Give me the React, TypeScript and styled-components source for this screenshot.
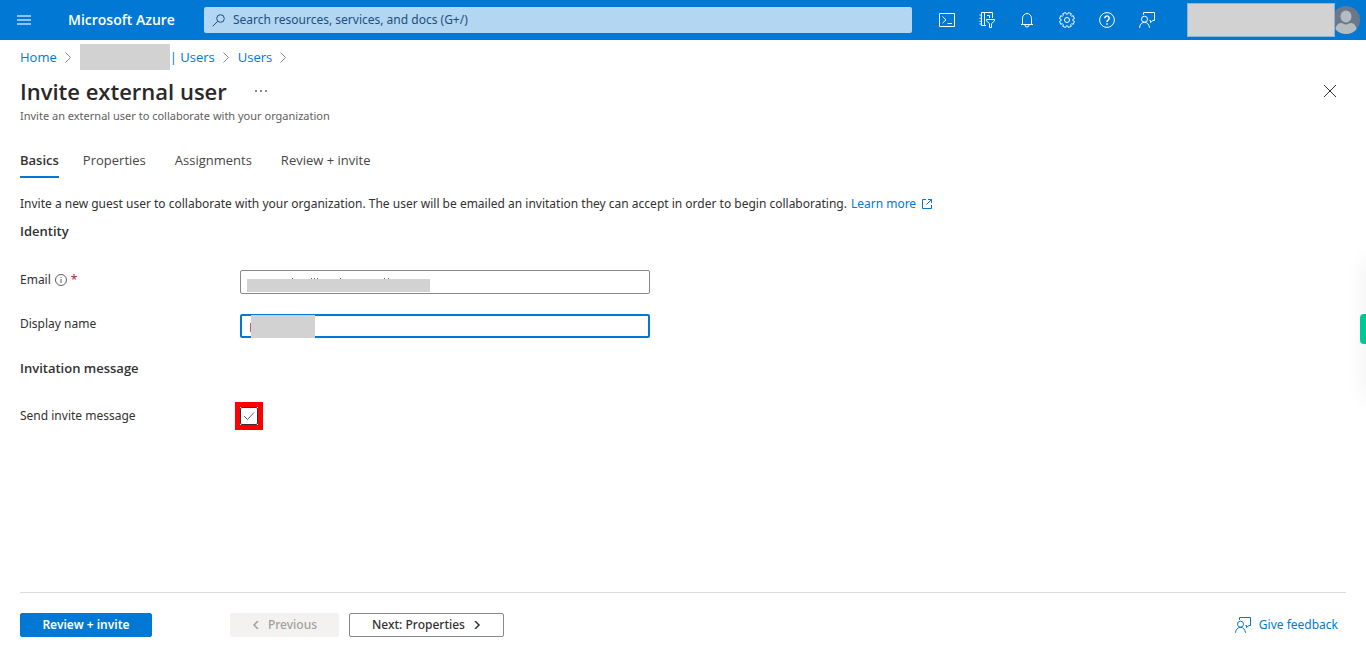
import React, { useState } from "react";
import styled, { createGlobalStyle, css } from "styled-components";

const GlobalStyle = createGlobalStyle`
  *, *::before, *::after { box-sizing: border-box; }
  body {
    margin: 0;
    background: #fff;
    color: #323130;
    font-family: "Noto Sans", "Open Sans", sans-serif;
    font-size: 12px;
    line-height: 18px;
  }
  button, input { font: inherit; color: inherit; }
  svg { display: block; flex: none; }
`;

const Page = styled.div`
  min-height: 100vh;
  display: flex;
  flex-direction: column;
`;

const TopBar = styled.header`
  height: 40px;
  display: flex;
  align-items: center;
  background: #0078d4;
  color: #fff;
`;

const BarButton = styled.button<{ $wide?: boolean }>`
  width: ${(p) => (p.$wide ? 48 : 40)}px;
  height: 40px;
  flex: none;
  padding: 0;
  border: 0;
  background: none;
  display: grid;
  place-items: center;
`;

const Brand = styled.a`
  width: 136px;
  flex: none;
  margin-left: 20px;
  color: #fff;
  font-family: "Open Sans", sans-serif;
  font-size: 14px;
  line-height: 20px;
  font-weight: 600;
  white-space: nowrap;
  text-decoration: none;
`;

const SearchBox = styled.label`
  flex: 1;
  height: 26px;
  padding: 0 8px;
  display: flex;
  align-items: center;
  gap: 8px;
  border-radius: 2px;
  background: #b3d6f2;
  color: #1b4f80;
`;

const SearchInput = styled.input`
  flex: 1;
  min-width: 0;
  padding: 0;
  border: 0;
  outline: 0;
  background: none;
  &::placeholder { color: #1b4f80; opacity: 1; }
`;

const BarActions = styled.nav`
  flex: none;
  display: flex;
  margin: 0 20px 0 15px;
`;

const Account = styled.div`
  flex: none;
  display: flex;
  align-items: center;
  padding-right: 6px;
`;

const Mask = styled.span<{ $w: number; $h: number }>`
  width: ${(p) => p.$w}px;
  height: ${(p) => p.$h}px;
  flex: none;
  background: #d2d2d2;
`;

const AccountMask = styled(Mask)`
  border: 1px solid #8fb4d2;
  z-index: 1;
`;

const Avatar = styled.span`
  margin-left: -3px;
`;

const Main = styled.main`
  flex: 1;
  padding: 0 20px;
`;

const Breadcrumb = styled.nav`
  height: 34px;
  display: flex;
  align-items: center;
  gap: 8px;
  font-family: "Open Sans", sans-serif;
  font-size: 13px;
`;

const Link = styled.a`
  color: #0078d4;
  text-decoration: none;
`;

const CrumbGroup = styled.span`
  display: flex;
  align-items: center;
  color: #0078d4;
`;

const TitleRow = styled.div`
  height: 34px;
  display: flex;
  align-items: center;
`;

const Title = styled.h1`
  margin: 0;
  font-family: "Open Sans", sans-serif;
  font-size: 22px;
  line-height: 30px;
  font-weight: 600;
  color: #292827;
`;

const IconButton = styled.button<{ $end?: boolean }>`
  width: 32px;
  height: 32px;
  padding: 0;
  border: 0;
  background: none;
  display: grid;
  place-items: center;
  margin-left: ${(p) => (p.$end ? "auto" : "18px")};
`;

const Subtitle = styled.p`
  margin: 0;
  font-size: 11px;
  line-height: 16px;
  color: #605e5c;
`;

const Tabs = styled.div`
  display: flex;
  gap: 24px;
  margin-top: 18px;
`;

const Tab = styled.button<{ $active: boolean }>`
  height: 36px;
  padding: 2px 5px 0 0;
  border: 0;
  border-bottom: 2px solid transparent;
  background: none;
  font-family: "Open Sans", sans-serif;
  font-size: 13px;
  color: #484644;
  ${(p) =>
    p.$active &&
    css`
      padding-right: 0;
      border-bottom-color: #0078d4;
      color: #323130;
      font-weight: 600;
    `}
`;

const Intro = styled.p`
  margin: 17px 0 0;
  display: flex;
  flex-wrap: wrap;
  gap: 4px;
`;

const LearnMore = styled(Link)`
  display: flex;
  align-items: center;
  gap: 6px;
`;

const Section = styled.h2<{ $gap: number }>`
  margin: ${(p) => p.$gap}px 0 0;
  font-family: "Open Sans", sans-serif;
  font-size: 13px;
  line-height: 18px;
  font-weight: 600;
`;

const Row = styled.div<{ $gap: number; $center?: boolean }>`
  display: flex;
  align-items: ${(p) => (p.$center ? "center" : "flex-start")};
  margin-top: ${(p) => p.$gap}px;
`;

const Label = styled.label`
  width: 220px;
  flex: none;
  display: flex;
  align-items: center;
  gap: 4px;
  height: 20px;
  svg { color: #605e5c; }
`;

const Required = styled.span`
  color: #a4262c;
`;

const Field = styled.div`
  position: relative;
  flex: 0 1 410px;
`;

const TextInput = styled.input<{ $focused?: boolean }>`
  display: block;
  width: 100%;
  height: 24px;
  padding: 0 8px;
  outline: 0;
  border: ${(p) => (p.$focused ? "2px solid #0078d4" : "1px solid #8a8886")};
  border-radius: 2px;
  background: #fff;
`;

const EmailMask = styled.svg`
  position: absolute;
  left: 7px;
  top: 7px;
`;

const NameMask = styled.svg`
  position: absolute;
  left: 9px;
  top: 1px;
`;

const Highlight = styled.span`
  width: 28px;
  height: 28px;
  margin-left: -5px;
  position: relative;
  display: grid;
  place-items: center;
  border: 5px solid #f00;
`;

const Checkbox = styled.input`
  appearance: none;
  width: 18px;
  height: 18px;
  margin: 0;
  border: 1px solid #323130;
  border-radius: 2px;
  background: #fff;
  &:not(:checked) + svg { display: none; }
`;

const Tick = styled.svg`
  position: absolute;
  inset: 0;
  pointer-events: none;
`;

const Footer = styled.footer`
  margin: 0 20px;
  padding: 20px 8px 20px 0;
  border-top: 1px solid #dcdcdc;
  display: flex;
  align-items: center;
`;

const Button = styled.button<{ $kind: "primary" | "plain"; $w: number }>`
  width: ${(p) => p.$w}px;
  height: 24px;
  padding: 0;
  display: flex;
  align-items: center;
  justify-content: center;
  gap: 8px;
  border-radius: 2px;
  border: 1px solid ${(p) => (p.$kind === "primary" ? "#0078d4" : "#8a8886")};
  background: ${(p) => (p.$kind === "primary" ? "#0078d4" : "#fff")};
  color: ${(p) => (p.$kind === "primary" ? "#fff" : "#323130")};
  font-weight: ${(p) => (p.$kind === "primary" ? 600 : 500)};
  &:disabled {
    border-color: #f3f2f1;
    background: #f3f2f1;
    color: #a19f9d;
  }
`;

const Steps = styled.div`
  display: flex;
  gap: 10px;
  margin-left: 78px;
`;

const Feedback = styled(Link)`
  margin-left: auto;
  display: flex;
  align-items: center;
  gap: 8px;
`;

const DockShade = styled.aside`
  position: fixed;
  right: 0;
  top: 240px;
  width: 6px;
  height: 178px;
  display: flex;
  align-items: center;
  &::before {
    content: "";
    position: absolute;
    right: -8px;
    top: 20px;
    bottom: 20px;
    width: 8px;
    box-shadow: 0 0 20px rgba(0, 0, 0, 0.1);
  }
`;

const DockHandle = styled.button`
  position: relative;
  width: 6px;
  height: 30px;
  padding: 0;
  border: 0;
  border-radius: 4px 0 0 4px;
  background: #00c796;
`;

type StrokeProps = { size?: number; children: React.ReactNode; width?: number };
const Stroke = ({ size = 16, width = 1, children }: StrokeProps) => (
  <svg width={size} height={size} viewBox={`0 0 ${size} ${size}`} fill="none" stroke="currentColor" strokeWidth={width} aria-hidden>
    {children}
  </svg>
);

const MenuIcon = () => (
  <svg width="14" height="10" viewBox="0 0 14 10" fill="#8fc3ec" aria-hidden>
    <path d="M0 0h14v2H0zM0 4h14v2H0zM0 8h14v2H0z" />
  </svg>
);
const SearchIcon = () => (
  <Stroke size={13}>
    <circle cx="8.5" cy="4.5" r="3.800" />
    <path d="M5.700 7.300.7 12.300" />
  </Stroke>
);
const ShellIcon = () => (
  <Stroke>
    <path d="M.5 1.5h15v13H.5z" />
    <path d="m3.500 4.500 3.500 3.300-3.500 3.300M8.500 11.500H13" />
  </Stroke>
);
const DirectoryIcon = () => (
  <Stroke>
    <path d="M7 13.500H2.500V.5h11V6M5.500.5v13M10.500 6V3.500H8M.5 3h2M.5 6.200h2M.5 9.300h2M.5 12h2" />
    <path d="M7.500 7.500h8v1.300l-3 3v3.700h-2v-3.700l-3-3z" />
  </Stroke>
);
const BellIcon = () => (
  <Stroke>
    <path d="M3.500 12.500V6.500a4.500 5 0 0 1 9 0v6M2 12.500h12M6 13a2 2 0 0 0 4 0" />
  </Stroke>
);

const gearOutline =
  [0, 1, 2, 3, 4, 5, 6, 7]
    .flatMap((tooth) =>
      [
        [-16, 5.9],
        [-12, 7.6],
        [12, 7.6],
        [16, 5.9],
      ].map(([offset, radius]) => {
        const angle = ((tooth * 45 + 22.5 + offset) * Math.PI) / 180;
        return `${(8 + radius * Math.cos(angle)).toFixed(2)} ${(8 + radius * Math.sin(angle)).toFixed(2)}`;
      })
    )
    .join("L");

const GearIcon = () => (
  <Stroke>
    <circle cx="8" cy="8" r="2.500" />
    <path d={`M${gearOutline}z`} strokeLinejoin="round" />
  </Stroke>
);
const HelpIcon = () => (
  <Stroke>
    <circle cx="8" cy="8" r="7.400" />
    <path d="M5.800 6.200a2.200 2.200 0 1 1 3.500 1.700C8.300 8.600 8 9 8 10M8 11.200v1.500" strokeWidth="1.500" />
  </Stroke>
);
const FeedbackIcon = () => (
  <Stroke>
    <circle cx="5.500" cy="7.200" r="3" />
    <path d="M.5 15.800c.3-3.200 2.300-5.500 5-5.500s4.700 2.300 5 5.500M4.500 3V.5h11v8h-1.500l-2.500 2v-2h-1" />
  </Stroke>
);
const CrumbIcon = () => (
  <svg width="7" height="12" viewBox="0 0 7 12" fill="none" stroke="#8a8886" aria-hidden>
    <path d="m.5 1.500 5 5-5 5" />
  </svg>
);
const AvatarIcon = () => (
  <svg width="28" height="28" viewBox="0 0 28 28" aria-hidden>
    <clipPath id="face"><circle cx="14" cy="14" r="14" /></clipPath>
    <g clipPath="url(#face)">
      <path d="M0 0h28v28H0z" fill="#69788a" />
      <ellipse cx="14" cy="10.500" rx="5.500" ry="6" fill="#b4bbc1" />
      <path d="M3 28c0-7 2-11 6-11 2 0 3 1.500 5 1.500s3-1.500 5-1.500c4 0 6 4 6 11z" fill="#b4bbc1" />
    </g>
  </svg>
);

const barActions = [
  { label: "Cloud Shell", icon: <ShellIcon /> },
  { label: "Directories and subscriptions", icon: <DirectoryIcon /> },
  { label: "Notifications", icon: <BellIcon /> },
  { label: "Settings", icon: <GearIcon /> },
  { label: "Help", icon: <HelpIcon /> },
  { label: "Feedback", icon: <FeedbackIcon /> },
];

const tabs = ["Basics", "Properties", "Assignments", "Review + invite"];

export default function App() {
  const [active, setActive] = useState("Basics");
  return (
    <Page>
      <GlobalStyle />
      <TopBar>
        <BarButton $wide aria-label="Show portal menu"><MenuIcon /></BarButton>
        <Brand href="#">Microsoft Azure</Brand>
        <SearchBox>
          <SearchIcon />
          <SearchInput type="search" aria-label="Search" placeholder="Search resources, services, and docs (G+/)" />
        </SearchBox>
        <BarActions>
          {barActions.map((a) => (
            <BarButton key={a.label} aria-label={a.label}>{a.icon}</BarButton>
          ))}
        </BarActions>
        <Account>
          <AccountMask $w={148} $h={34} />
          <Avatar><AvatarIcon /></Avatar>
        </Account>
      </TopBar>

      <Main>
        <Breadcrumb aria-label="Breadcrumb">
          <Link href="#">Home</Link>
          <CrumbIcon />
          <CrumbGroup>
            <Mask $w={90} $h={26} />
            <span>|&nbsp;</span>
            <Link href="#">Users</Link>
          </CrumbGroup>
          <CrumbIcon />
          <Link href="#">Users</Link>
          <CrumbIcon />
        </Breadcrumb>

        <TitleRow>
          <Title>Invite external user</Title>
          <IconButton aria-label="More">
            <svg width="12" height="2" viewBox="0 0 12 2" fill="#8a8886" aria-hidden>
              <path d="M0 0h2v2H0zM5 0h2v2H5zM10 0h2v2h-2z" />
            </svg>
          </IconButton>
          <IconButton $end aria-label="Close">
            <Stroke size={12}><path d="m0 0 12 12M12 0 0 12" /></Stroke>
          </IconButton>
        </TitleRow>
        <Subtitle>Invite an external user to collaborate with your organization</Subtitle>

        <Tabs role="tablist">
          {tabs.map((t) => (
            <Tab key={t} role="tab" aria-selected={t === active} $active={t === active} onClick={() => setActive(t)}>
              {t}
            </Tab>
          ))}
        </Tabs>

        <Intro>
          Invite a new guest user to collaborate with your organization. The user will be emailed an invitation they can accept in order to begin collaborating.
          <LearnMore href="#">
            Learn more
            <Stroke size={10}><path d="M4 .5H.5v9h9V6M6 .5h3.500V4M9.500.5l-5 5" /></Stroke>
          </LearnMore>
        </Intro>

        <Section $gap={9}>Identity</Section>
        <Row $gap={30}>
          <Label htmlFor="email">
            Email
            <Stroke size={12}><circle cx="6" cy="6" r="5.500" /><path d="M6 5v4M6 3v1" /></Stroke>
            <Required>*</Required>
          </Label>
          <Field>
            <TextInput id="email" type="email" />
            <EmailMask width="183" height="15" viewBox="0 0 183 15" aria-hidden>
              <path d="M0 2h183v13H0z" fill="#d2d2d2" />
              <path d="M45 1h1v1h-1zM64 1h1v1h-1zM67 1h1v1h-1zM70 1h1v1h-1zM93 1h1v1h-1zM137 1h1v1h-1zM141 1h1v1h-1z" fill="#605e5c" />
            </EmailMask>
          </Field>
        </Row>
        <Row $gap={20}>
          <Label htmlFor="display-name">Display name</Label>
          <Field>
            <TextInput id="display-name" type="text" $focused />
            <NameMask width="66" height="23" viewBox="0 0 66 23" aria-hidden>
              <path d="M2 0h64v23H2z" fill="#d2d2d2" />
              <path d="M1 8h1v9H1z" fill="#b8646a" />
            </NameMask>
          </Field>
        </Row>

        <Section $gap={21}>Invitation message</Section>
        <Row $gap={25} $center>
          <Label htmlFor="send-invite">Send invite message</Label>
          <Highlight>
            <Checkbox id="send-invite" type="checkbox" defaultChecked />
            <Tick width="18" height="18" viewBox="0 0 18 18" fill="none" stroke="#605e5c" aria-hidden>
              <path d="m4 9 3.500 3.500L14 5.500" />
            </Tick>
          </Highlight>
        </Row>
      </Main>

      <Footer>
        <Button $kind="primary" $w={132}>Review + invite</Button>
        <Steps>
          <Button $kind="plain" $w={109} disabled>
            <Stroke size={8} width={1.5}><path d="M6 0 2 4l4 4" /></Stroke>
            Previous
          </Button>
          <Button $kind="plain" $w={155}>
            Next: Properties
            <Stroke size={8} width={1.5}><path d="m2 0 4 4-4 4" /></Stroke>
          </Button>
        </Steps>
        <Feedback href="#"><FeedbackIcon />Give feedback</Feedback>
      </Footer>

      <DockShade>
        <DockHandle aria-label="Open side panel" />
      </DockShade>
    </Page>
  );
}
